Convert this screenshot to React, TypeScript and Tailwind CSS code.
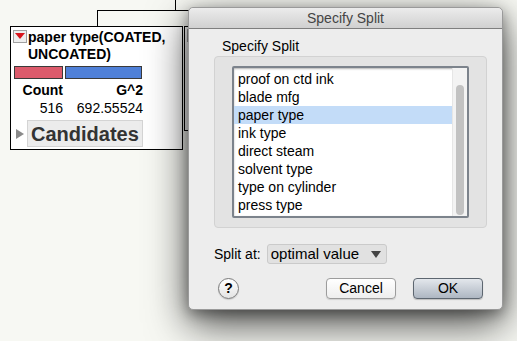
import React from 'react';

const fields = [
  'proof on ctd ink',
  'blade mfg',
  'paper type',
  'ink type',
  'direct steam',
  'solvent type',
  'type on cylinder',
  'press type',
];

const TreeNode = () => {
  return (
    <div className="absolute left-[10px] top-[26px] w-[173px] h-[124px] bg-white border border-black">
      {/* Title */}
      <div className="flex items-start pl-[2px] pt-[2px]">
        <div className="w-[14px] h-[13px] mt-[1px] border border-[#a0a0a0] bg-[#ededed] flex justify-center pt-[2px] shrink-0">
          <svg width="10" height="6" viewBox="0 0 10 6">
            <path d="M0 0 L10 0 L5 6 Z" fill="#d8141c" />
          </svg>
        </div>
        <div className="ml-[1px] text-[14px] leading-[17px] font-bold text-black">
          paper type(COATED,
          <br />
          UNCOATED)
        </div>
      </div>

      {/* Bars */}
      <div className="flex gap-[2px] pl-[3px] mt-[3px]">
        <div className="w-[49px] h-[13px] bg-[#dc5a6b] border border-[#3a3a3a]" />
        <div className="w-[77px] h-[13px] bg-[#4f80d8] border border-[#3a3a3a]" />
      </div>

      {/* Stats */}
      <div className="grid grid-cols-[49px_78px] gap-x-[2px] pl-[3px] mt-[2px] text-[14px] leading-[18px] text-black">
        <div className="text-right font-bold">Count</div>
        <div className="text-right font-bold">G^2</div>
        <div className="text-right">516</div>
        <div className="text-right">692.55524</div>
      </div>

      {/* Candidates */}
      <div className="flex items-center mt-[3px] pl-[5px]">
        <svg width="8" height="10" viewBox="0 0 8 10" className="mr-[3px]">
          <path d="M0 0 L8 5 L0 10 Z" fill="#8a8a8a" />
        </svg>
        <div className="h-[27px] px-[3px] flex items-center bg-[#ececec] border border-[#d4d4d4] text-[20px] font-bold text-[#333333]">
          Candidates
        </div>
      </div>
    </div>
  );
};

const Dialog = () => {
  return (
    <div className="absolute left-[188px] top-[7px] w-[315px] h-[303px] bg-[#ededed] border border-[#9a9a9a] rounded-[5px] shadow-[0_14px_40px_rgba(0,0,0,0.7),0_4px_14px_rgba(0,0,0,0.35)] flex flex-col text-[14px] text-black">
      {/* Title bar */}
      <div className="h-[21px] shrink-0 rounded-t-[5px] bg-gradient-to-b from-[#ececec] to-[#d0d0d0] border-b border-[#7e7e7e] flex items-center justify-center text-[#444444] text-[14px]">
        Specify Split
      </div>

      <div className="flex flex-col pl-[25px] pr-[15px]">
        <div className="ml-[8px] mt-[9px] leading-[16px]">Specify Split</div>

        {/* Group box */}
        <div className="mt-[2px] h-[172px] bg-[#e3e3e3] border border-[#d2d2d2] rounded-[4px] pt-[9px] pl-[17px] pr-[17px]">
          <div className="h-[152px] border-2 border-[#7c838c] rounded-[2px] bg-white flex shadow-[inset_0_1px_2px_rgba(0,0,0,0.3)]">
            <div className="flex-1 flex flex-col pt-[2px]">
              {fields.map((f) => (
                <div
                  key={f}
                  className={`h-[18px] leading-[18px] pl-[4px] ${f === 'paper type' ? 'bg-[#c3dcf8]' : ''}`}
                >
                  {f}
                </div>
              ))}
            </div>
            <div className="w-[15px] bg-[#f3f3f3] border-l border-[#e6e6e6] flex justify-center pt-[17px] pb-[1px]">
              <div className="w-[8px] h-full rounded-full bg-[#c2c2c2]" />
            </div>
          </div>
        </div>

        {/* Split at */}
        <div className="flex items-center mt-[16px] h-[20px]">
          <span>Split at:</span>
          <div className="ml-[6px] w-[120px] h-[20px] bg-[#e1e1e1] border border-[#cacaca] rounded-[3px] flex items-center justify-between pl-[3px] pr-[5px]">
            <span className="text-[15px]">optimal value</span>
            <svg width="10" height="7" viewBox="0 0 10 7">
              <path d="M0 0 L10 0 L5 7 Z" fill="#444444" />
            </svg>
          </div>
        </div>

        {/* Buttons */}
        <div className="flex items-center mt-[14px] pr-[4px]">
          <div className="ml-[4px] w-[21px] h-[21px] rounded-full border border-[#7a7a7a] bg-gradient-to-b from-white to-[#e4e4e4] flex items-center justify-center font-bold text-[14px] shadow-[0_1px_1px_rgba(0,0,0,0.15)]">
            ?
          </div>
          <div className="flex-1" />
          <div className="w-[70px] h-[21px] rounded-[4px] border border-[#9c9c9c] bg-gradient-to-b from-white to-[#eeeeee] flex items-center justify-center shadow-[0_1px_1px_rgba(0,0,0,0.12)]">
            Cancel
          </div>
          <div className="ml-[17px] w-[70px] h-[21px] rounded-[4px] border border-[#5d6670] bg-gradient-to-b from-[#e3e7ec] to-[#aeb7c2] flex items-center justify-center shadow-[0_1px_1px_rgba(0,0,0,0.2)]">
            OK
          </div>
        </div>
      </div>
    </div>
  );
};

const App = () => {
  return (
    <div className="relative w-[517px] h-[341px] overflow-hidden bg-[#f7f8f3] font-['Liberation_Sans',Arial,sans-serif]">
      {/* tree connectors */}
      <div className="absolute left-[175px] top-0 w-px h-[11px] bg-black" />
      <div className="absolute left-[97px] top-[10px] w-[200px] h-px bg-black" />
      <div className="absolute left-[97px] top-[10px] w-px h-[16px] bg-black" />

      <TreeNode />

      {/* neighbouring node, mostly hidden */}
      <div className="absolute left-[184px] top-[26px] w-[120px] h-[105px] bg-white border border-black">
        <div className="ml-[2px] mt-[2px] w-[14px] h-[13px] border border-[#a0a0a0] bg-[#ededed]" />
      </div>

      <Dialog />
    </div>
  );
};

export default App;
